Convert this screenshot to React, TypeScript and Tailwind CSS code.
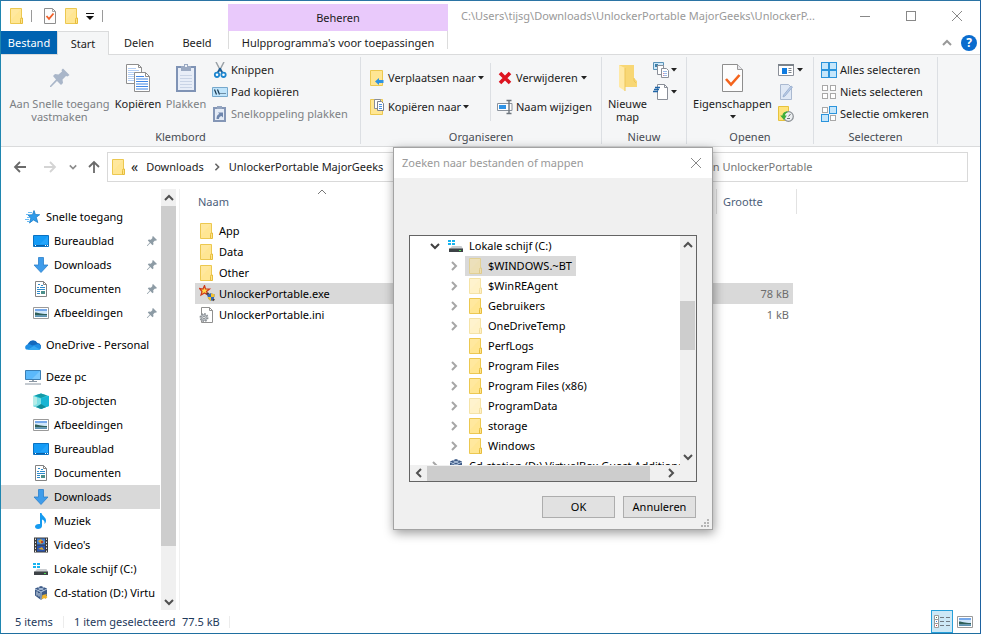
import type { ReactNode } from 'react';
import clsx from 'clsx';

/* ---------- icons ---------- */

function FolderIcon({ faded = false }: { faded?: boolean }) {
  return (
    <svg width="16" height="16" viewBox="0 0 16 16" className={clsx('shrink-0', faded && 'opacity-50')}>
      <path d="M1.5 0.5h11v15h-11z" fill="#ffe693" stroke="#ecc850" />
      <path d="M2 1h10L2 12z" fill="#ffeaa5" opacity=".6" />
      <path d="M11.500 15.500v-4l.5-1.500h1.500v5.500z" fill="#ffe38a" stroke="#e6bd3c" />
    </svg>
  );
}

function CheckPageIcon({ big = false }: { big?: boolean }) {
  return big ? (
    <svg width="22" height="28" viewBox="0 0 22 28">
      <path d="M.5.5h15l5 5v22H.5z" fill="#fdfdfd" stroke="#8e8e8e" />
      <path d="M15.5.5v5h5" fill="#e8e8ec" stroke="#9a9a9a" />
      <path d="M4 15l5 5.500L17.500 11" fill="none" stroke="#f4641d" strokeWidth="2.600" />
    </svg>
  ) : (
    <svg width="12" height="16" viewBox="0 0 12 16">
      <path d="M.5.5h8l3 3v12H.5z" fill="#fdfdfd" stroke="#8e8e8e" />
      <path d="M8.500.5v3h3" fill="none" stroke="#a5a5a5" />
      <path d="M2.500 8l2.500 2.800L9.500 5.500" fill="none" stroke="#f0602a" strokeWidth="1.800" />
    </svg>
  );
}

function Caret() {
  return (
    <svg width="6" height="4" viewBox="0 0 6 4" className="shrink-0">
      <path d="M0 0h6L3 3.500z" fill="#222" />
    </svg>
  );
}

function Chevron({ dir, color = '#505050', size = 10, stroke = 2 }: { dir: 'up' | 'down' | 'left' | 'right'; color?: string; size?: number; stroke?: number }) {
  const paths = { up: 'M1 7l4-4 4 4', down: 'M1 3l4 4 4-4', left: 'M7 1L3 5l4 4', right: 'M3 1l4 4-4 4' };
  return (
    <svg width={size} height={size} viewBox="0 0 10 10" className="shrink-0">
      <path d={paths[dir]} fill="none" stroke={color} strokeWidth={stroke} />
    </svg>
  );
}

function CloseIcon({ color }: { color: string }) {
  return (
    <svg width="12" height="12" viewBox="0 0 12 12">
      <path d="M1 1l10 10M11 1L1 11" stroke={color} fill="none" />
    </svg>
  );
}

function BigPinIcon() {
  return (
    <svg width="22" height="22" viewBox="0 0 22 22">
      <path d="M14 1.500L20.500 8l-2 1.500-1.500-.5-3.500 3.500.5 3.500-2 2-4-4-6 6H1v-1l6-6.500-3-3.500 2-2 3.500.5L13 4.500 12.500 3z" fill="#a9b6c9" />
    </svg>
  );
}

function PinIcon() {
  return (
    <svg width="12" height="12" viewBox="0 0 12 12">
      <path d="M7 1l4 4-1.200.8-.8-.3-1.800 1.800.3 2-1 1-2.200-2.200L1.500 11H1v-.5l2.800-3L1.800 5.500l1-1 2 .2L6.500 3 6.200 2z" fill="#8d9ba5" />
    </svg>
  );
}

function CopyIcon() {
  return (
    <svg width="24" height="28" viewBox="0 0 24 28">
      <path d="M.5.5h12l3 3v16H.5z" fill="#fff" stroke="#8e8e8e" />
      <path d="M12.500.5v3h3" fill="none" stroke="#8e8e8e" />
      <path d="M2 4.500h8M2 6.500h11M2 8.500h11M2 10.500h6M2 12.500h6M2 14.500h6M2 16.500h6" stroke="#b4cff5" />
      <path d="M8.500 8.500h11l4 4v15h-15z" fill="#fff" stroke="#8e8e8e" />
      <path d="M19.500 8.500v4h4" fill="none" stroke="#8e8e8e" />
      <path d="M10 12.500h8M10 15h12M10 17.500h12M10 20h12M10 22.500h12M10 25h12" stroke="#3f86e6" strokeWidth="1.200" />
    </svg>
  );
}

function PasteIcon() {
  return (
    <svg width="20" height="30" viewBox="0 0 20 30">
      <path d="M1 4h18v24H1z" fill="#e8eef8" stroke="#7f93b5" strokeWidth="2" />
      <path d="M4 12.500h12M4 15.500h12M4 18.500h12M4 21.500h12M4 24.500h12" stroke="#c9d4e6" />
      <path d="M5 3h3V1h4v2h3v5H5z" fill="#9aa9c2" />
      <path d="M9 2h2v2H9z" fill="#eef2f8" />
    </svg>
  );
}

function ScissorsIcon() {
  return (
    <svg width="16" height="16" viewBox="0 0 16 16">
      <path d="M4 0l5 9.500M12 0L7 9.500" stroke="#9aa1a7" strokeWidth="1.500" fill="none" />
      <path d="M8 6.500l2.500 4.500M8 6.500L5.500 11" stroke="#1d5d94" strokeWidth="1.800" fill="none" />
      <circle cx="5" cy="12.800" r="2.200" fill="#fff" stroke="#1f86cf" strokeWidth="1.800" />
      <circle cx="11.500" cy="12.800" r="2.200" fill="#fff" stroke="#1f86cf" strokeWidth="1.800" />
    </svg>
  );
}

function PathIcon() {
  return (
    <svg width="16" height="16" viewBox="0 0 16 16">
      <path d="M.5 3.500h15v9H.5z" fill="#bfe4fb" stroke="#76a8cc" />
      <path d="M2.500 5.500l2 5M5.500 5.500l2 5" stroke="#1b3850" strokeWidth="1.200" />
      <path d="M8.500 9.500h1M10.500 9.500h1M12.500 9.500h1" stroke="#1b3850" />
    </svg>
  );
}

function ShortcutIcon() {
  return (
    <svg width="16" height="18" viewBox="0 0 16 18">
      <path d="M2 3h11v13H2z" fill="#e4ebf6" stroke="#8496b6" strokeWidth="2" />
      <path d="M5 1h5v3H5z" fill="#94a5c0" />
      <path d="M4.500 14c0-3 1-4.500 3-5L6 7.500h5v5l-1.500-1.500C7.500 11.500 7 12.500 7 14z" fill="#6e86ad" />
    </svg>
  );
}

function MoveToIcon() {
  return (
    <svg width="16" height="16" viewBox="0 0 16 16">
      <path d="M.5.5h12v15H.5z" fill="#ffe693" stroke="#ecc850" />
      <path d="M5 11.500L9 8v2h4.500v3H9v2z" fill="#2f93e0" />
    </svg>
  );
}

function CopyToIcon() {
  return (
    <svg width="16" height="16" viewBox="0 0 16 16">
      <path d="M.5.5h12v15H.5z" fill="#ffe693" stroke="#ecc850" />
      <path d="M4.500.5h6v9h-6z" fill="#fff" stroke="#8a8f98" />
      <path d="M7.500 2.500h4l2 2v7h-6z" fill="#fff" stroke="#7d828c" />
      <path d="M9 5.500h3M9 7.500h3M9 9.500h3" stroke="#4a90e6" />
    </svg>
  );
}

function DeleteIcon() {
  return (
    <svg width="16" height="16" viewBox="0 0 16 16">
      <path d="M3 3l10 10M13 3L3 13" stroke="#dd1420" strokeWidth="3.600" />
    </svg>
  );
}

function RenameIcon() {
  return (
    <svg width="16" height="16" viewBox="0 0 16 16">
      <path d="M.5 4.500h14.500v7H.5z" fill="#fff" stroke="#8a929c" />
      <path d="M2 6h7v4H2z" fill="#2f93e6" />
      <path d="M9.500 1.500h5M9.500 14.500h5M12 1.500v13" stroke="#6c747c" strokeWidth="1.400" />
    </svg>
  );
}

function NewFolderIcon() {
  return (
    <svg width="20" height="28" viewBox="0 0 20 28">
      <path d="M1 1h15v13l3 3v6H6z" fill="#f8d775" />
      <path d="M1 1l6 3v23l-6-4z" fill="#ffe9a6" />
      <path d="M7 4v23M16 14v3l2 2" stroke="#edc65a" fill="none" />
    </svg>
  );
}

function NewItemIcon() {
  return (
    <svg width="16" height="16" viewBox="0 0 16 16">
      <path d="M.5.500h10v7H.5z" fill="#cfe9fb" stroke="#5a93b8" />
      <path d="M2 2h3v3H2z" fill="#3d7fa8" />
      <path d="M4.500 3.500h6v9h-6z" fill="#fff" stroke="#8a8f98" />
      <path d="M8.500 6.500h5l2 2v7h-7z" fill="#fff" stroke="#8a8f98" />
      <path d="M10 9.500h4M10 11.500h4M10 13.500h4" stroke="#9bbbe8" />
      <path d="M10 11.500h1M10 13.500h1" stroke="#d78aa0" />
    </svg>
  );
}

function EasyAccessIcon() {
  return (
    <svg width="16" height="16" viewBox="0 0 16 16">
      <path d="M4.500.500h7l3 3v12h-10z" fill="#fff" stroke="#8a8f98" />
      <path d="M11.500.500v3h3" fill="none" stroke="#8a8f98" />
      <path d="M2 3.500h5M1 5.500h5M0 7.500h5" stroke="#2166a8" strokeWidth="1.300" />
    </svg>
  );
}

function OpenWithIcon() {
  return (
    <svg width="16" height="16" viewBox="0 0 16 16">
      <path d="M.5 2.500h15v11H.5z" fill="#fff" stroke="#8a8f98" />
      <path d="M0 2h16v2H0z" fill="#7b828a" />
      <path d="M4 6h5v6H4z" fill="#0f7be0" />
      <path d="M10.500 6.500h3M10.500 8.500h3M10.500 10.500h3" stroke="#7b828a" />
    </svg>
  );
}

function EditIcon() {
  return (
    <svg width="16" height="16" viewBox="0 0 16 16">
      <path d="M2.500.500h8l3 3v12h-11z" fill="#dfe8f5" stroke="#aab9d0" />
      <path d="M14.500 3L7 12l-2 1 .6-2L13 2z" fill="#b9cbe6" stroke="#93a9cb" strokeWidth=".8" />
    </svg>
  );
}

function HistoryIcon() {
  return (
    <svg width="16" height="16" viewBox="0 0 16 16">
      <path d="M.5.500h10v14H.5z" fill="#ffe37a" stroke="#e6c23d" />
      <circle cx="10.500" cy="10.500" r="4.800" fill="#eceff1" stroke="#8a8f94" strokeWidth="1.200" />
      <path d="M10.500 10.500l2-2.500M9 12.500h3" stroke="#6a6f74" fill="none" />
      <path d="M9.500 5.500C5.500 5.500 4.500 8 4.500 9.500H2.200L6 14l2.800-4.500H7c0-1.500.8-2.500 2.500-3z" fill="#3fae3a" />
    </svg>
  );
}

function SelectIcon({ on }: { on: [boolean, boolean, boolean, boolean] }) {
  return (
    <svg width="16" height="16" viewBox="0 0 16 16">
      {on.map((active, i) => (
        <rect
          key={i}
          x={active ? (i % 2) * 8 + 0.5 : (i % 2) * 8 + 1.5}
          y={active ? Math.floor(i / 2) * 8 + 0.5 : Math.floor(i / 2) * 8 + 1.5}
          width={active ? 7 : 5}
          height={active ? 7 : 5}
          fill={active ? '#c5e6fb' : '#fff'}
          stroke={active ? '#2b94dc' : '#a8a8a8'}
        />
      ))}
    </svg>
  );
}

function StarIcon() {
  return (
    <svg width="16" height="16" viewBox="0 0 16 16">
      <path d="M9 1.500l1.400 4 4.300.2-3.400 2.600 1.500 5.200L8.500 11 4.500 14l1.300-4.900L3 6l4.500-.3z" fill="#2f9bea" stroke="#1b7cc8" strokeWidth=".8" />
      <path d="M3 3.500h4M1 5.500h3M2 8.500h3M0 10.500h4M2 12.500h3" stroke="#6bbbf2" />
    </svg>
  );
}

function DesktopIcon() {
  return (
    <svg width="16" height="16" viewBox="0 0 16 16">
      <path d="M.5 2.500h15v11H.5z" fill="#149bf6" stroke="#0a72c2" />
      <path d="M15 3v8L7 11z" fill="#2faaff" opacity=".6" />
      <path d="M1 12.500h14" stroke="#0b5fa5" />
      <path d="M2 12.500h1M12 12.500h1M14 12.500h1" stroke="#fff" />
    </svg>
  );
}

function DownloadIcon() {
  return (
    <svg width="16" height="16" viewBox="0 0 16 16">
      <path d="M5.500.5h5V8h4.500L8 15.500 1 8h4.500z" fill="#3f9cea" stroke="#2b80cc" strokeWidth=".8" />
    </svg>
  );
}

function DocumentIcon() {
  return (
    <svg width="16" height="16" viewBox="0 0 16 16">
      <path d="M2.500.5h8l3 3v12h-11z" fill="#fff" stroke="#838383" />
      <path d="M10.500.5v3h3" fill="none" stroke="#838383" />
      <path d="M4 6.500h2M8 4.500h2M7 6.500h5M4 8.500h8M4 10.500h3M4 12.500h3" stroke="#2f8bcb" />
      <path d="M5 3.500h2" stroke="#2f8bcb" />
      <path d="M8 10h4v3H8z" fill="#4c8f8a" />
    </svg>
  );
}

function PictureIcon() {
  return (
    <svg width="16" height="16" viewBox="0 0 16 16">
      <path d="M.5 2.500h15v11H.5z" fill="#fff" stroke="#9a9a9a" />
      <path d="M2 4h12v8H2z" fill="#cfe6fa" />
      <path d="M2 4h12v2H2z" fill="#76a8ea" />
      <path d="M2 7.500c3 0 5 1.500 12 1.500v1.500H2z" fill="#2f5f58" />
      <path d="M2 10.500h12V12H2z" fill="#5b93b4" />
    </svg>
  );
}

function CloudIcon() {
  return (
    <svg width="16" height="16" viewBox="0 0 16 16">
      <path d="M4 12a4 4 0 0 1-.5-6A5 5 0 0 1 12.500 6 3.500 3.500 0 0 1 15 12z" fill="#1268bd" />
      <path d="M1 12.500C-.8 10.500.5 7.500 3 7.500c2-.5 3 .5 4 1l6-1.500c3 .5 4 4 1.500 5.800z" fill="#1f8ee4" />
      <path d="M2 13L9 9l6 3.500c-.5.500-1 .5-2 .5z" fill="#35a9f2" />
    </svg>
  );
}

function PcIcon() {
  return (
    <svg width="16" height="16" viewBox="0 0 16 16">
      <path d="M.5 1.500h15v9H.5z" fill="#5bb9fb" stroke="#3b7fb4" />
      <path d="M15 2v8H7z" fill="#8fd2ff" opacity=".6" />
      <path d="M7 11h2v1H7z" fill="#9aa4ad" />
      <path d="M4 12.500h8M0 15h16" stroke="#8a96a2" />
    </svg>
  );
}

function CubeIcon() {
  return (
    <svg width="16" height="16" viewBox="0 0 16 16">
      <path d="M0 3l8-2.500L16 3v10l-8 3-8-3z" fill="#2bc4d8" />
      <path d="M0 3l8 2.500V16l-8-3z" fill="#7fe0e4" />
      <path d="M8 5.500L16 3v10l-8 3z" fill="#17b5d4" />
      <path d="M2 2.500L8 .5l6 2-6 2.500z" fill="#159aa6" />
      <path d="M0 3l4 1.500V11l-4 2z" fill="#b4ece8" />
      <path d="M3 14l5-3 5 3-5 2z" fill="#118c98" />
    </svg>
  );
}

function MusicIcon() {
  return (
    <svg width="16" height="16" viewBox="0 0 16 16">
      <path d="M7 0h1.500c.5 3 4.500 4 4.500 7.500 0 1.500-.5 2.500-1.500 3.500.5-3-1-4-2.500-4.500V13c0 2-2 3-4 3s-3-1-3-2.500S4 10.500 7 11z" fill="#169bf0" />
    </svg>
  );
}

function VideoIcon() {
  return (
    <svg width="16" height="16" viewBox="0 0 16 16">
      <path d="M1 .5h14v15H1z" fill="#3b3b3b" />
      <path d="M4 1.500h8v6H4z" fill="#3f7fd8" />
      <path d="M4 8.500h8v6H4z" fill="#2a55b0" />
      <path d="M5 4l3-2 3 3-3 2zM5 12l4-2 2 3z" fill="#d9a531" />
      <path d="M8 4h2v2H8z" fill="#b8402c" />
      <path d="M2.500 1.500v14M13.500 1.500v14" stroke="#e6e6e6" strokeDasharray="1.500 1.500" />
    </svg>
  );
}

function DriveIcon() {
  return (
    <svg width="16" height="16" viewBox="0 0 16 16" className="shrink-0">
      <path d="M0 2h3v2H0zM4 2h3v2H4zM0 5h3v2H0zM4 5h3v2H4z" fill="#18b4f0" />
      <path d="M4 8h9.500l1.500 3H1.500z" fill="#c9ccd0" />
      <path d="M1 10.500h14V14H1z" fill="#3d4246" />
      <path d="M11 12.500h2" stroke="#4be04f" />
    </svg>
  );
}

function VboxIcon() {
  return (
    <svg width="16" height="16" viewBox="0 0 16 16" className="shrink-0">
      <path d="M8 1l6 2.500v7L8 15l-6-4.500v-7z" fill="#3d5a86" />
      <path d="M2 4l6 3 6-3M8 7v8M5 2.500l6 3M11 2.500l-6 3" stroke="#b8cbe2" fill="none" />
      <path d="M4 6.500v4M6 8v3.500" stroke="#dbe6f2" />
      <path d="M8.500 14.500l1-4.500 4.500-1-1 1.500 1.500 1.500-2 2L11 13z" fill="#f0b429" />
    </svg>
  );
}

function ExeIcon() {
  return (
    <svg width="17" height="17" viewBox="0 0 17 17" className="shrink-0">
      <path d="M5.500.5l1 3.500L10.500 4 7.500 6.500 9 10 5.500 8 2 10l1-3.500L.5 3.500 4 4z" fill="#ffd84a" stroke="#cf3a1c" strokeWidth="1.200" />
      <path d="M8 8l7 7.500" stroke="#4a3d36" strokeWidth="2.500" />
      <path d="M8.500 9c2 0 3-.5 3.500-1 .8.600 2 1 3.500 1 .3 3-.8 5.500-3.500 7-2.700-1.500-3.800-4-3.500-7z" fill="#2f67b8" />
      <path d="M12 8c.8.600 2 1 3.500 1v3H12zM8.600 12H12v4c-2-1-3-2.500-3.400-4z" fill="#f2c230" />
    </svg>
  );
}

function IniIcon() {
  return (
    <svg width="16" height="16" viewBox="0 0 16 16" className="shrink-0">
      <path d="M2.500.5h8l3 3v12h-11z" fill="#fff" stroke="#909090" />
      <path d="M10.500.5v3h3" fill="none" stroke="#909090" />
      <circle cx="5" cy="10.500" r="3.500" fill="#d2d6da" stroke="#8c9196" strokeWidth="2" strokeDasharray="1.600 1.100" />
      <circle cx="5" cy="10.500" r="2.800" fill="#cdd1d5" stroke="#9aa0a5" />
      <circle cx="5" cy="10.500" r="1.200" fill="#fff" stroke="#8c9196" />
    </svg>
  );
}

function ArrowIcon({ dir, color }: { dir: 'left' | 'right' | 'up'; color: string }) {
  const paths = { left: 'M13 7H2M7 2L2 7l5 5', right: 'M1 7h11M7 2l5 5-5 5', up: 'M7 13V2M2 7l5-5 5 5' };
  return (
    <svg width="14" height="14" viewBox="0 0 14 14">
      <path d={paths[dir]} fill="none" stroke={color} strokeWidth="1.800" />
    </svg>
  );
}

/* ---------- ribbon ---------- */

function RibbonGroup({ label, className, children }: { label: string; className: string; children: ReactNode }) {
  return (
    <section aria-label={label} className={clsx('my-0.5 flex shrink-0 flex-col border-r border-[#dcdfe3]', className)}>
      <div className="flex flex-1 items-start">{children}</div>
      <h2 className="mb-px text-center leading-[13px] text-[#474b52]">{label}</h2>
    </section>
  );
}

function BigButton({ icon, lines, className, caret }: { icon: ReactNode; lines: string[]; className: string; caret?: boolean }) {
  return (
    <button className={clsx('mt-[5px] flex shrink-0 flex-col items-center whitespace-nowrap', className)}>
      <span className="flex h-8 items-center">{icon}</span>
      <span className="mt-[3px] flex flex-col leading-[13px]">
        {lines.map((line) => <span key={line}>{line}</span>)}
      </span>
      {caret && <span className="mt-[5px]"><Caret /></span>}
    </button>
  );
}

function SmallButton({ icon, label, title, className, caret }: { icon: ReactNode; label?: string; title?: string; className?: string; caret?: boolean }) {
  return (
    <button aria-label={label ?? title} className={clsx('flex items-center whitespace-nowrap', className ?? 'h-[22px] gap-[3px]')}>
      <span className="flex w-4 justify-center">{icon}</span>
      {label && <span>{label}</span>}
      {caret && <Caret />}
    </button>
  );
}

function Ribbon() {
  return (
    <div className="flex h-[92px] border-b border-[#dadbdc] bg-[#f5f6f7]">
      <RibbonGroup label="Klembord" className="w-[360px]">
        <BigButton icon={<BigPinIcon />} lines={['Aan Snelle toegang', 'vastmaken']} className="ml-1.5 w-[105px] text-[#7c7f84]" />
        <BigButton icon={<CopyIcon />} lines={['Kopiëren']} className="ml-0.5 w-12" />
        <BigButton icon={<PasteIcon />} lines={['Plakken']} className="ml-0.5 w-11 text-[#7c7f84]" />
        <div className="mt-0.5 ml-1 flex flex-col">
          <SmallButton icon={<ScissorsIcon />} label="Knippen" />
          <SmallButton icon={<PathIcon />} label="Pad kopiëren" />
          <SmallButton icon={<ShortcutIcon />} label="Snelkoppeling plakken" className="h-[22px] gap-[3px] text-[#7c7f84]" />
        </div>
      </RibbonGroup>
      <RibbonGroup label="Organiseren" className="w-[241px]">
        <div className="mt-1.5 ml-[9px] flex w-[121px] flex-col border-r border-[#dcdfe3]">
          <SmallButton icon={<MoveToIcon />} label="Verplaatsen naar" caret className="h-[29px] gap-0.5" />
          <SmallButton icon={<CopyToIcon />} label="Kopiëren naar" caret className="h-[29px] gap-0.5" />
        </div>
        <div className="mt-1.5 ml-1.5 flex flex-col">
          <SmallButton icon={<DeleteIcon />} label="Verwijderen" caret className="h-[29px] gap-[3px]" />
          <SmallButton icon={<RenameIcon />} label="Naam wijzigen" className="h-[29px] gap-[3px]" />
        </div>
      </RibbonGroup>
      <RibbonGroup label="Nieuw" className="w-[85px]">
        <BigButton icon={<NewFolderIcon />} lines={['Nieuwe', 'map']} className="w-[51px]" />
        <div className="mt-0.5 flex flex-col">
          <SmallButton icon={<NewItemIcon />} title="Nieuw item" caret className="h-[22px] gap-0.5" />
          <SmallButton icon={<EasyAccessIcon />} title="Snelle toegang" caret className="h-[22px] gap-0.5" />
        </div>
      </RibbonGroup>
      <RibbonGroup label="Openen" className="w-[127px]">
        <BigButton icon={<CheckPageIcon big />} lines={['Eigenschappen']} className="w-[91px]" caret />
        <div className="mt-0.5 flex flex-col">
          <SmallButton icon={<OpenWithIcon />} title="Openen met" caret />
          <SmallButton icon={<EditIcon />} title="Bewerken" />
          <SmallButton icon={<HistoryIcon />} title="Geschiedenis" />
        </div>
      </RibbonGroup>
      <RibbonGroup label="Selecteren" className="w-[124px]">
        <div className="mt-0.5 ml-[7px] flex flex-col">
          <SmallButton icon={<SelectIcon on={[true, true, true, true]} />} label="Alles selecteren" />
          <SmallButton icon={<SelectIcon on={[false, false, false, false]} />} label="Niets selecteren" />
          <SmallButton icon={<SelectIcon on={[false, true, true, false]} />} label="Selectie omkeren" />
        </div>
      </RibbonGroup>
    </div>
  );
}

/* ---------- title bar and tabs ---------- */

function Header() {
  return (
    <header className="flex border-b border-[#dadbdc]">
      <div className="w-[227px] shrink-0">
        <div className="flex h-[30px] items-center pl-2">
          <FolderIcon />
          <span className="ml-1.5 h-3 w-px bg-[#9a9a9a]" />
          <button aria-label="Eigenschappen" className="ml-3"><CheckPageIcon /></button>
          <button aria-label="Nieuwe map" className="ml-2"><FolderIcon /></button>
          <button aria-label="Werkbalk aanpassen" className="ml-1.5">
            <svg width="8" height="7" viewBox="0 0 8 7"><path d="M0 .5h8" stroke="#111" /><path d="M0 3h8L4 7z" fill="#111" /></svg>
          </button>
          <span className="ml-2 h-3 w-px bg-[#9a9a9a]" />
        </div>
        <nav className="flex h-[23px] text-center">
          <button className="w-14 bg-[#0063b1] text-white">Bestand</button>
          <button className="-mb-px h-6 w-[52px] border border-b-0 border-[#dadbdc] bg-[#f5f6f7]">Start</button>
          <button className="w-[60px]">Delen</button>
          <button className="w-14">Beeld</button>
        </nav>
      </div>
      <div className="flex w-[220px] shrink-0 flex-col pt-[3px] text-center">
        <div className="flex h-[27px] items-center justify-center bg-[#e9c9fb]">Beheren</div>
        <div className="flex h-[23px] justify-between">
          <span className="h-[18px] w-px bg-[#dcdcdc]" />
          <button className="whitespace-nowrap">Hulpprogramma's voor toepassingen</button>
          <span className="h-[18px] w-px bg-[#dcdcdc]" />
        </div>
      </div>
      <div className="min-w-0 flex-1">
        <div className="flex h-[30px] items-center justify-between pl-[13px]">
          <h1 className="truncate text-[#999]">C:\Users\tijsg\Downloads\UnlockerPortable MajorGeeks\UnlockerP...</h1>
          <div className="flex">
            <button aria-label="Minimaliseren" className="flex h-[28px] w-[46px] items-center justify-center">
              <span className="h-px w-2.5 bg-[#888]" />
            </button>
            <button aria-label="Maximaliseren" className="flex h-[28px] w-[46px] items-center justify-center">
              <span className="h-2.5 w-2.5 border border-[#888]" />
            </button>
            <button aria-label="Sluiten" className="flex h-[28px] w-[46px] items-center justify-center"><CloseIcon color="#888" /></button>
          </div>
        </div>
        <div className="flex h-[23px] items-center justify-end gap-[9px] pr-[3px]">
          <button aria-label="Lint minimaliseren"><Chevron dir="up" color="#999" /></button>
          <button aria-label="Help" className="h-4 w-4 rounded-full bg-[#0a6cce] text-[12px] leading-4 font-bold text-white">?</button>
        </div>
      </div>
    </header>
  );
}

function AddressRow() {
  return (
    <div className="flex h-[42px] items-start pt-[5px] pr-[12px] pl-3">
      <div className="flex h-[30px] w-[94px] shrink-0 items-center">
        <button aria-label="Terug"><ArrowIcon dir="left" color="#6a6a6a" /></button>
        <button aria-label="Vooruit" className="ml-4"><ArrowIcon dir="right" color="#d4d4d4" /></button>
        <button aria-label="Recente locaties" className="ml-3"><Chevron dir="down" color="#8c8c8c" size={8} /></button>
        <button aria-label="Omhoog" className="ml-2.5"><ArrowIcon dir="up" color="#6a6a6a" /></button>
      </div>
      <div className="flex h-[30px] flex-1 items-center overflow-hidden border border-[#d9d9d9] whitespace-nowrap">
        <span className="ml-[3px] flex"><FolderIcon /></span>
        <span className="ml-1 text-[14px]">«</span>
        <button className="ml-2">Downloads</button>
        <span className="mr-2 ml-[9px] flex"><Chevron dir="right" color="#666" size={8} /></span>
        <button>UnlockerPortable MajorGeeks</button>
      </div>
      <input
        aria-label="Zoeken"
        placeholder="Zoeken in UnlockerPortable"
        className="ml-3 h-[30px] w-[342px] border border-[#d9d9d9] pb-0.5 pl-[42px] placeholder:text-[#757575]"
      />
    </div>
  );
}

/* ---------- navigation pane ---------- */

interface NavItem {
  label: string;
  icon: ReactNode;
  root?: boolean;
  pinned?: boolean;
  active?: boolean;
}

const navGroups: NavItem[][] = [
  [
    { label: 'Snelle toegang', icon: <StarIcon />, root: true },
    { label: 'Bureaublad', icon: <DesktopIcon />, pinned: true },
    { label: 'Downloads', icon: <DownloadIcon />, pinned: true },
    { label: 'Documenten', icon: <DocumentIcon />, pinned: true },
    { label: 'Afbeeldingen', icon: <PictureIcon />, pinned: true },
  ],
  [{ label: 'OneDrive - Personal', icon: <CloudIcon />, root: true }],
  [
    { label: 'Deze pc', icon: <PcIcon />, root: true },
    { label: '3D-objecten', icon: <CubeIcon /> },
    { label: 'Afbeeldingen', icon: <PictureIcon /> },
    { label: 'Bureaublad', icon: <DesktopIcon /> },
    { label: 'Documenten', icon: <DocumentIcon /> },
    { label: 'Downloads', icon: <DownloadIcon />, active: true },
    { label: 'Muziek', icon: <MusicIcon /> },
    { label: "Video's", icon: <VideoIcon /> },
    { label: 'Lokale schijf (C:)', icon: <DriveIcon /> },
    { label: 'Cd-station (D:) Virtu', icon: <VboxIcon /> },
  ],
];

function Sidebar() {
  return (
    <aside className="flex shrink-0">
      <nav className="flex w-[159px] flex-col gap-2 pt-4 pb-1 text-black">
        {navGroups.map((group) => (
          <ul key={group[0].label}>
            {group.map((item) => (
              <li key={item.label}>
                <button
                  className={clsx(
                    'flex h-6 w-full items-center gap-[5px] overflow-hidden text-left whitespace-nowrap',
                    item.root ? 'pl-6' : 'pl-8',
                    item.active && 'bg-[#d9d9d9]',
                  )}
                >
                  <span className="shrink-0">{item.icon}</span>
                  <span className="flex-1">{item.label}</span>
                  {item.pinned && <span className="mr-0.5"><PinIcon /></span>}
                </button>
              </li>
            ))}
          </ul>
        ))}
      </nav>
      <div className="ml-px flex w-[15px] flex-col items-center bg-[#f0f0f0]">
        <span className="flex h-[17px] items-center"><Chevron dir="up" /></span>
        <span className="h-[340px] w-full bg-[#cdcdcd]" />
        <span className="mt-auto flex h-[17px] items-center"><Chevron dir="down" /></span>
      </div>
    </aside>
  );
}

/* ---------- file list ---------- */

const files = [
  { name: 'App', icon: <FolderIcon />, size: '' },
  { name: 'Data', icon: <FolderIcon />, size: '' },
  { name: 'Other', icon: <FolderIcon />, size: '' },
  { name: 'UnlockerPortable.exe', icon: <ExeIcon />, size: '78 kB', selected: true },
  { name: 'UnlockerPortable.ini', icon: <IniIcon />, size: '1 kB' },
];

function FileList() {
  return (
    <main className="ml-[3px] flex-1 border-l border-[#f0f0f0] pl-[15px]">
      <table className="w-[602px] table-fixed border-collapse">
        <thead>
          <tr className="text-left align-top text-[#4c607a]">
            <th className="w-[254px] pb-1.5 font-normal">
              <span className="relative block h-[25px] pl-[3px] leading-[26px]">
                Naam
                <span className="absolute -top-0.5 left-[122px]"><Chevron dir="up" color="#777" stroke={1} /></span>
              </span>
            </th>
            <th className="pb-1.5" />
            <th className="w-[77px] pb-1.5 font-normal">
              <span className="block h-[25px] border-l border-[#e2e2e2] pl-1.5 leading-[26px]">Grootte</span>
            </th>
            <th className="w-1 pb-1.5"><span className="block h-[25px] border-r border-[#e2e2e2]" /></th>
          </tr>
        </thead>
        <tbody className="text-black">
          {files.map((file) => (
            <tr key={file.name} className="h-[21px]">
              <td className={clsx('p-0 pl-1', file.selected && 'bg-[#d9d9d9]')}>
                <span className="flex items-center gap-1 whitespace-nowrap">
                  <span className="w-4">{file.icon}</span>
                  {file.name}
                </span>
              </td>
              <td className={clsx('p-0', file.selected && 'bg-[#d9d9d9]')} />
              <td className={clsx('p-0 pr-1 text-right text-[#6d6d6d]', file.selected && 'bg-[#d9d9d9]')}>{file.size}</td>
              <td className="p-0" />
            </tr>
          ))}
        </tbody>
      </table>
    </main>
  );
}

function StatusBar() {
  return (
    <footer className="flex h-[23px] items-center pl-3.5 text-[#1e395b]">
      <span className="w-12">5 items</span>
      <span className="h-3 w-px bg-[#ececec]" />
      <span className="ml-2.5 w-[108px] whitespace-nowrap">1 item geselecteerd</span>
      <span className="w-[47px]">77.5 kB</span>
      <span className="h-3 w-px bg-[#ececec]" />
      <div className="mr-[7px] ml-auto flex items-center gap-1">
        <button aria-label="Details" className="flex h-[23px] w-[22px] items-center justify-center border border-[#26a0da] bg-[#cce8f6]">
          <svg width="16" height="14" viewBox="0 0 16 14">
            <path d="M.5.5h4v4h-4zM.5 4.500h4v4h-4zM.5 8.500h4v4h-4z" fill="#fff" stroke="#9a9a9a" />
            <path d="M2 2.500h1" stroke="#4a8a5a" /><path d="M2 6.500h1" stroke="#3f7fd8" /><path d="M2 10.500h1" stroke="#c33" />
            <path d="M6 2.500h4M12 2.500h4M6 6.500h4M12 6.500h4M6 10.500h4M12 10.500h4" stroke="#707a82" />
          </svg>
        </button>
        <button aria-label="Grote pictogrammen"><PictureIcon /></button>
      </div>
    </footer>
  );
}

/* ---------- folder dialog ---------- */

const tree = [
  { name: '$WINDOWS.~BT', faded: true, expandable: true, selected: true },
  { name: '$WinREAgent', faded: true, expandable: true },
  { name: 'Gebruikers', expandable: true },
  { name: 'OneDriveTemp', faded: true, expandable: true },
  { name: 'PerfLogs' },
  { name: 'Program Files', expandable: true },
  { name: 'Program Files (x86)', expandable: true },
  { name: 'ProgramData', faded: true, expandable: true },
  { name: 'storage', expandable: true },
  { name: 'Windows', expandable: true },
];

function FolderDialog() {
  return (
    <div role="dialog" aria-label="Zoeken naar bestanden of mappen" className="absolute top-[146px] left-[392px] w-[320px] border border-[#a3a3a3] bg-[#f0f0f0] text-black shadow-[1px_3px_10px_rgba(0,0,0,0.4)]">
      <div className="flex h-[30px] items-center justify-between bg-white pr-2.5 pl-2">
        <h2 className="text-[#999]">Zoeken naar bestanden of mappen</h2>
        <button aria-label="Sluiten"><CloseIcon color="#888" /></button>
      </div>
      <div className="mx-[15px] mt-[57px] border border-[#646464] bg-[#f0f0f0]">
        <div className="flex h-[229px]">
          <ul className="flex-1 overflow-hidden bg-white">
            <li className="flex h-5 items-center whitespace-nowrap">
              <button aria-label="Samenvouwen" className="ml-5"><Chevron dir="down" color="#404040" /></button>
              <span className="mr-[5px] ml-2"><DriveIcon /></span>
              Lokale schijf (C:)
            </li>
            {tree.map((node) => (
              <li key={node.name} className="flex h-5 items-center pl-[39px]">
                <span className="flex w-4">
                  {node.expandable && <button aria-label={'Uitvouwen ' + node.name}><Chevron dir="right" color="#a6a6a6" /></button>}
                </span>
                <span className={clsx('flex h-5 items-center gap-1 pr-1 pl-[3px] whitespace-nowrap', node.selected && 'bg-[#d9d9d9]')}>
                  <FolderIcon faded={node.faded} />
                  {node.name}
                </span>
              </li>
            ))}
            <li className="flex h-5 items-center whitespace-nowrap">
              <button aria-label="Uitvouwen Cd-station" className="ml-5"><Chevron dir="right" color="#a6a6a6" /></button>
              <span className="mr-[5px] ml-2"><VboxIcon /></span>
              Cd-station (D:) VirtualBox Guest Additions
            </li>
          </ul>
          <div className="flex w-4 flex-col items-center bg-[#f0f0f0]">
            <span className="flex h-[17px] items-center"><Chevron dir="up" /></span>
            <span className="mt-12 mr-px h-[49px] w-[15px] bg-[#cdcdcd]" />
            <span className="mt-auto flex h-[17px] items-center"><Chevron dir="down" /></span>
          </div>
        </div>
        <div className="flex h-4 items-center">
          <span className="flex w-[17px] justify-center"><Chevron dir="left" /></span>
          <span className="h-[15px] w-[223px] bg-[#cdcdcd]" />
          <span className="ml-4 flex w-[10px] justify-center"><Chevron dir="right" /></span>
        </div>
      </div>
      <div className="mt-3.5 flex justify-end gap-2 pr-4">
        <button className="h-[22px] w-[73px] border border-[#adadad] bg-[#e1e1e1]">OK</button>
        <button className="h-[22px] w-[73px] border border-[#adadad] bg-[#e1e1e1]">Annuleren</button>
      </div>
      <div className="flex h-[11px] items-end justify-end pr-[3px] pb-0.5">
        <svg width="8" height="8" viewBox="0 0 8 8"><path d="M6 0h2v2H6zM3 3h2v2H3zM6 3h2v2H6zM0 6h2v2H0zM3 6h2v2H3zM6 6h2v2H6z" fill="#b5b5b5" /></svg>
      </div>
    </div>
  );
}

export default function App() {
  return (
    <div className="relative flex min-h-screen flex-col overflow-hidden border border-t-[#2b74a4] border-r-[#1e62a0] border-b-[#1f6fa0] border-l-[#1f86b0] bg-white font-['Noto_Sans','Open_Sans',sans-serif] text-[11px] leading-[14px] text-[#1c1c1c]">
      <Header />
      <Ribbon />
      <AddressRow />
      <div className="flex flex-1">
        <Sidebar />
        <FileList />
      </div>
      <StatusBar />
      <FolderDialog />
    </div>
  );
}
